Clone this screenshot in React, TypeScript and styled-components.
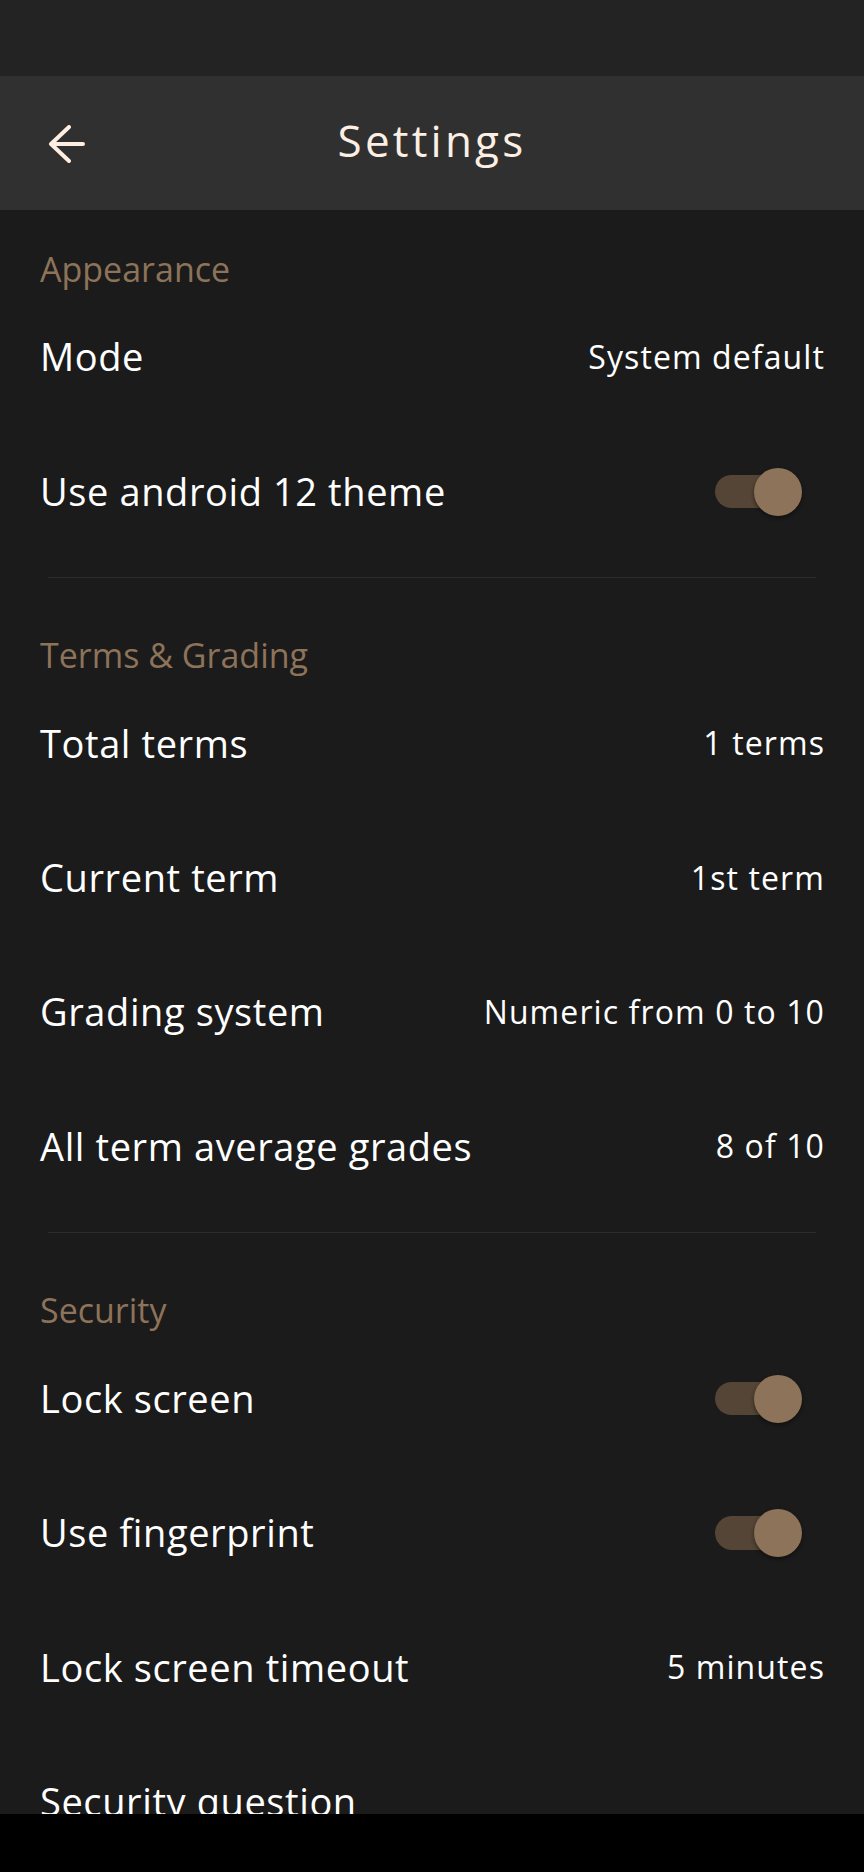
import { ReactElement } from "react";
import styled, { createGlobalStyle } from "styled-components";

interface ISettingRow {
  label: string;
  value?: string;
  toggle?: boolean;
}

interface ISection {
  title: string;
  rows: Array<ISettingRow>;
}

const sections: Array<ISection> = [
  {
    title: "Appearance",
    rows: [
      { label: "Mode", value: "System default" },
      { label: "Use android 12 theme", toggle: true },
    ],
  },
  {
    title: "Terms & Grading",
    rows: [
      { label: "Total terms", value: "1 terms" },
      { label: "Current term", value: "1st term" },
      { label: "Grading system", value: "Numeric from 0 to 10" },
      { label: "All term average grades", value: "8 of 10" },
    ],
  },
  {
    title: "Security",
    rows: [
      { label: "Lock screen", toggle: true },
      { label: "Use fingerprint", toggle: true },
      { label: "Lock screen timeout", value: "5 minutes" },
      { label: "Security question" },
    ],
  },
];

const BackArrow = (): ReactElement => (
  <svg width="37" height="38" viewBox="0 0 37 38" fill="none">
    <path
      d="M35 19H3M21 2L3 19L21 36"
      stroke="#fdeee1"
      strokeWidth="4"
      strokeLinecap="round"
      strokeLinejoin="round"
    />
  </svg>
);

const App = (): ReactElement => {
  return (
    <Screen>
      <GlobalStyle />
      <StatusBar />
      <AppBar>
        <BackButton>
          <BackArrow />
        </BackButton>
        <Title>Settings</Title>
      </AppBar>
      <Content>
        {sections.map((section, i) => (
          <div key={section.title}>
            {i > 0 && <Divider />}
            <SectionTitle>{section.title}</SectionTitle>
            {section.rows.map((row) => (
              <Row key={row.label}>
                <Label>{row.label}</Label>
                {row.value && <Value>{row.value}</Value>}
                {row.toggle && (
                  <Switch>
                    <Track />
                    <Thumb />
                  </Switch>
                )}
              </Row>
            ))}
          </div>
        ))}
      </Content>
      <NavBar />
    </Screen>
  );
};

export default App;

const GlobalStyle = createGlobalStyle`
  html, body {
    margin: 0;
    padding: 0;
    background-color: #1b1b1b;
  }
  body {
    font-family: "Open Sans", "Noto Sans", sans-serif;
  }
`;

const Screen = styled.div`
  display: flex;
  flex-direction: column;
  width: 864px;
  height: 1872px;
  overflow: hidden;
  background-color: #1b1b1b;
`;

const StatusBar = styled.div`
  height: 76px;
  flex-shrink: 0;
  background-color: #232323;
`;

const AppBar = styled.div`
  display: grid;
  grid-template-columns: 1fr auto 1fr;
  align-items: center;
  height: 134px;
  flex-shrink: 0;
  background-color: #303030;
`;

const BackButton = styled.div`
  display: flex;
  align-items: center;
  padding-left: 48px;
  padding-top: 2px;
`;

const Title = styled.div`
  font-size: 44px;
  line-height: 1.2;
  letter-spacing: 3.2px;
  color: #fdefe3;
  padding-bottom: 6px;
`;

const Content = styled.div`
  flex: 1;
  overflow: hidden;
`;

const SectionTitle = styled.div`
  height: 80px;
  box-sizing: border-box;
  padding: 38px 40px 0;
  font-size: 34px;
  line-height: 42px;
  color: #8d7359;
`;

const Row = styled.div`
  display: flex;
  align-items: center;
  justify-content: space-between;
  height: 134.4px;
  padding: 0 40px;
`;

const Label = styled.span`
  font-size: 38px;
  line-height: 1.2;
  letter-spacing: 0.6px;
  color: #ffffff;
`;

const Value = styled.span`
  font-size: 32px;
  line-height: 1.2;
  letter-spacing: 1.1px;
  margin-right: -1px;
  color: #ffffff;
`;

const Switch = styled.div`
  position: relative;
  width: 87px;
  height: 48px;
  margin-right: 22px;
`;

const Track = styled.div`
  position: absolute;
  left: 0;
  top: 7.2px;
  width: 82px;
  height: 33.6px;
  border-radius: 17px;
  background-color: #544536;
`;

const Thumb = styled.div`
  position: absolute;
  right: 0;
  top: 0;
  width: 48px;
  height: 48px;
  border-radius: 50%;
  background-color: #8d7359;
  box-shadow: 0 2px 4px rgba(0, 0, 0, 0.45);
`;

const Divider = styled.div`
  height: 1px;
  margin: 18.5px 48px 18px;
  background-color: #2b2b2b;
`;

const NavBar = styled.div`
  height: 58px;
  flex-shrink: 0;
  background-color: #000000;
`;
